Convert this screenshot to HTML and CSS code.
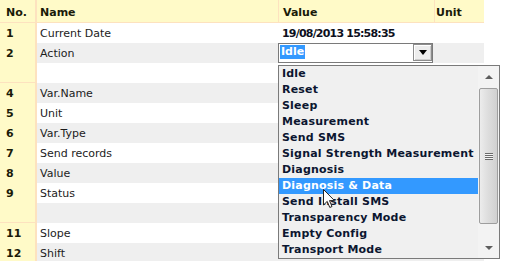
FILE: index.html
```html
<!DOCTYPE html>
<html lang="en">
<head>
    <meta charset="UTF-8">
    <title>Variables</title>
    <link rel="stylesheet" href="styles.css">
</head>
<body>
    <div class="grid">
        <div class="row head">
            <div class="no">No.</div>
            <div class="name">Name</div>
            <div class="val">Value</div>
            <div class="unit">Unit</div>
        </div>
        <div class="row">
            <div class="no">1</div>
            <div class="name">Current Date</div>
            <div class="val date">19/08/2013 15:58:35</div>
            <div class="unit"></div>
        </div>
        <div class="row alt">
            <div class="no">2</div>
            <div class="name">Action</div>
            <div class="val select-cell">
                <div class="select">
                    <span class="current"><span class="picked">Idle</span></span>
                    <span class="drop-btn"><span class="tri-down"></span></span>
                </div>
                <div class="listbox">
                    <div class="items">
                        <div class="item">Idle</div>
                        <div class="item">Reset</div>
                        <div class="item">Sleep</div>
                        <div class="item">Measurement</div>
                        <div class="item">Send SMS</div>
                        <div class="item">Signal Strength Measurement</div>
                        <div class="item">Diagnosis</div>
                        <div class="item hover">Diagnosis &amp; Data</div>
                        <div class="item">Send Install SMS</div>
                        <div class="item">Transparency Mode</div>
                        <div class="item">Empty Config</div>
                        <div class="item">Transport Mode</div>
                    </div>
                    <div class="scrollbar">
                        <div class="sb-btn"><span class="arrow-up"></span></div>
                        <div class="thumb"><span class="grip"></span></div>
                        <div class="track"></div>
                        <div class="sb-btn"><span class="arrow-down"></span></div>
                    </div>
                    <svg class="cursor" width="13" height="20" viewBox="0 0 13 20">
                        <path d="M0.5 0.5 L0.5 16 L4.2 12.4 L6.8 18.5 L9 17.5 L6.5 11.6 L11.5 11.6 Z" fill="#fff" stroke="#222" stroke-width="1"/>
                    </svg>
                </div>
            </div>
            <div class="unit"></div>
        </div>
        <div class="row">
            <div class="no"></div>
            <div class="name"></div>
            <div class="val"></div>
            <div class="unit"></div>
        </div>
        <div class="row alt">
            <div class="no">4</div>
            <div class="name">Var.Name</div>
            <div class="val"></div>
            <div class="unit"></div>
        </div>
        <div class="row">
            <div class="no">5</div>
            <div class="name">Unit</div>
            <div class="val"></div>
            <div class="unit"></div>
        </div>
        <div class="row alt">
            <div class="no">6</div>
            <div class="name">Var.Type</div>
            <div class="val"></div>
            <div class="unit"></div>
        </div>
        <div class="row">
            <div class="no">7</div>
            <div class="name">Send records</div>
            <div class="val"></div>
            <div class="unit"></div>
        </div>
        <div class="row alt">
            <div class="no">8</div>
            <div class="name">Value</div>
            <div class="val"></div>
            <div class="unit"></div>
        </div>
        <div class="row">
            <div class="no">9</div>
            <div class="name">Status</div>
            <div class="val"></div>
            <div class="unit"></div>
        </div>
        <div class="row alt">
            <div class="no"></div>
            <div class="name"></div>
            <div class="val"></div>
            <div class="unit"></div>
        </div>
        <div class="row">
            <div class="no">11</div>
            <div class="name">Slope</div>
            <div class="val"></div>
            <div class="unit"></div>
        </div>
        <div class="row alt">
            <div class="no">12</div>
            <div class="name">Shift</div>
            <div class="val"></div>
            <div class="unit"></div>
        </div>
    </div>
</body>
</html>
```

FILE: styles.css
```css
body {
    margin: 0;
    background: #fff;
    font-family: "DejaVu Sans", Verdana, sans-serif;
    font-size: 11px;
    color: #1c1c1c;
}
.grid {
    width: 484px;
}
.row {
    display: grid;
    grid-template-columns: 37px 241px 156px 50px;
    height: 20px;
    line-height: 20px;
}
.row > div {
    box-sizing: border-box;
    white-space: nowrap;
}
.row.alt {
    background: #efefef;
}
.no {
    background: #fffac8;
    border-right: 2px solid #fde2bf;
    border-bottom: 1px solid #fde2bf;
    padding: 1px 0 0 6px;
    font-weight: bold;
    color: #1a1a08;
}
.name {
    padding: 1px 0 0 3px;
}
.val {
    padding: 1px 0 0 4px;
}
.unit {
    padding: 1px 0 0 2px;
}
.date {
    font-weight: bold;
    letter-spacing: -0.8px;
    color: #0d1020;
    overflow: visible;
}

/* header */
.row.head {
    height: 22px;
    line-height: 17px;
    background: #fffac8;
    border-bottom: 1px solid #fde2bf;
    font-weight: bold;
    color: #1a1a08;
}
.row.head > div {
    padding-top: 4px;
    border-bottom: none;
}
.row.head .val {
    border-left: 1px solid #fde2bf;
}
.row.head .unit {
    border-left: 1px solid #fde2bf;
    padding-left: 1px;
}
.row.head .name {
    padding-left: 3px;
}

/* select */
.select-cell {
    position: relative;
    padding: 0 !important;
}
.select {
    display: flex;
    box-sizing: border-box;
    width: 155px;
    height: 20px;
    border: 1px solid #7a7a7a;
    background: #fff;
    padding: 0 0 1px 0;
}
.current {
    flex: 1;
    padding: 1px 0 0 1px;
    line-height: 14px;
}
.picked {
    display: inline-block;
    background: #3399ff;
    color: #fff;
    font-weight: bold;
    padding: 0 1px;
    height: 14px;
}
.drop-btn {
    width: 19px;
    box-sizing: border-box;
    border: 1px solid #8c8c8c;
    background: #ededed;
    box-shadow: inset 1px 1px #fff, inset -1px -1px #cdcdcd;
    display: flex;
    align-items: center;
    justify-content: center;
}
.tri-down {
    width: 0;
    height: 0;
    border-left: 4px solid transparent;
    border-right: 4px solid transparent;
    border-top: 5px solid #000;
}

/* dropdown list */
.listbox {
    position: absolute;
    left: 0;
    top: 22px;
    display: flex;
    width: 222px;
    height: 194px;
    box-sizing: border-box;
    border: 1px solid #7a7a7a;
    background: #f0f0f0;
    z-index: 2;
}
.items {
    width: 199px;
}
.item {
    height: 16px;
    line-height: 15px;
    padding-left: 3px;
    font-weight: bold;
    letter-spacing: 0.2px;
    color: #0c1630;
    white-space: nowrap;
}
.item.hover {
    background: #3399ff;
    color: #fff;
}
.scrollbar {
    width: 21px;
    display: flex;
    flex-direction: column;
    background: #f3f3f3;
}
.sb-btn {
    height: 21px;
    display: flex;
    align-items: center;
    justify-content: center;
}
.arrow-up, .arrow-down {
    width: 0;
    height: 0;
    border-left: 4px solid transparent;
    border-right: 4px solid transparent;
}
.arrow-up {
    border-bottom: 4px solid #5e5e5e;
}
.arrow-down {
    border-top: 4px solid #5e5e5e;
}
.thumb {
    height: 136px;
    margin: 1px 1px 0 1px;
    box-sizing: border-box;
    border: 1px solid #9e9e9e;
    border-radius: 2px;
    background: linear-gradient(to right, #ececec, #dedede 45%, #d0d0d0);
    display: flex;
    align-items: center;
    justify-content: center;
}
.grip {
    width: 8px;
    height: 7px;
    background: repeating-linear-gradient(to bottom, #6a6a6a 0 1px, #f4f4f4 1px 2px);
}
.track {
    flex: 1;
}
.cursor {
    position: absolute;
    left: 44px;
    top: 123px;
}
```
